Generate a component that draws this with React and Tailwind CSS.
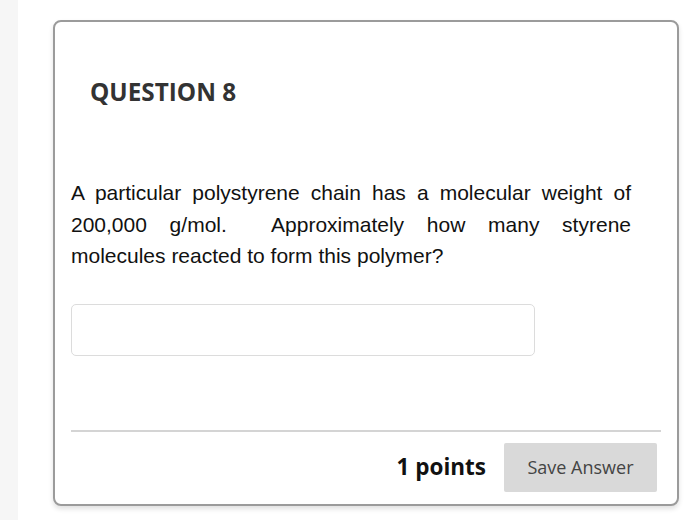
const lines = [
  'A particular polystyrene chain has a molecular weight of',
  '200,000 g/mol.\u00a0 Approximately how many styrene',
];

export default function App() {
  return (
    <div className="flex h-[520px] w-[700px] bg-white">
      <div className="w-[18px] shrink-0 bg-[#f6f6f6]" />
      <div className="flex-1 pl-[35px] pr-[21px] pt-[20px]">
        <div className="flex h-[486px] flex-col rounded-[8px] border-2 border-[#9b9b9b] bg-white px-[16px] shadow-[0_3px_5px_rgba(0,0,0,0.12)]">
          <h2 className="mt-[54px] pl-[19px] font-['Open_Sans',sans-serif] text-[24.3px] font-bold leading-[32px] text-[#333]">
            QUESTION 8
          </h2>
          <div className="mt-[69px] w-[560px] font-['Liberation_Sans',Arial,sans-serif] text-[21px] leading-[31.5px] text-[#111]">
            {lines.map((l) => (
              <p key={l} className="text-justify [text-align-last:justify]">
                {l}
              </p>
            ))}
            <p>molecules reacted to form this polymer?</p>
          </div>
          <div className="mt-[32px] h-[52px] w-[464px] rounded-[5px] border border-[#dcdcdc] bg-white" />
          <div className="mt-[74px] h-[2px] w-full bg-[#d4d4d4]" />
          <div className="mt-[11px] flex items-center justify-end gap-[18px] pr-[4px]">
            <span className="font-['Open_Sans',sans-serif] text-[22.5px] font-bold text-[#111]">1 points</span>
            <button className="h-[49px] w-[153px] rounded-[2px] bg-[#d9d9d9] font-['Open_Sans',sans-serif] text-[18px] text-[#444]">
              Save Answer
            </button>
          </div>
        </div>
      </div>
    </div>
  );
}
